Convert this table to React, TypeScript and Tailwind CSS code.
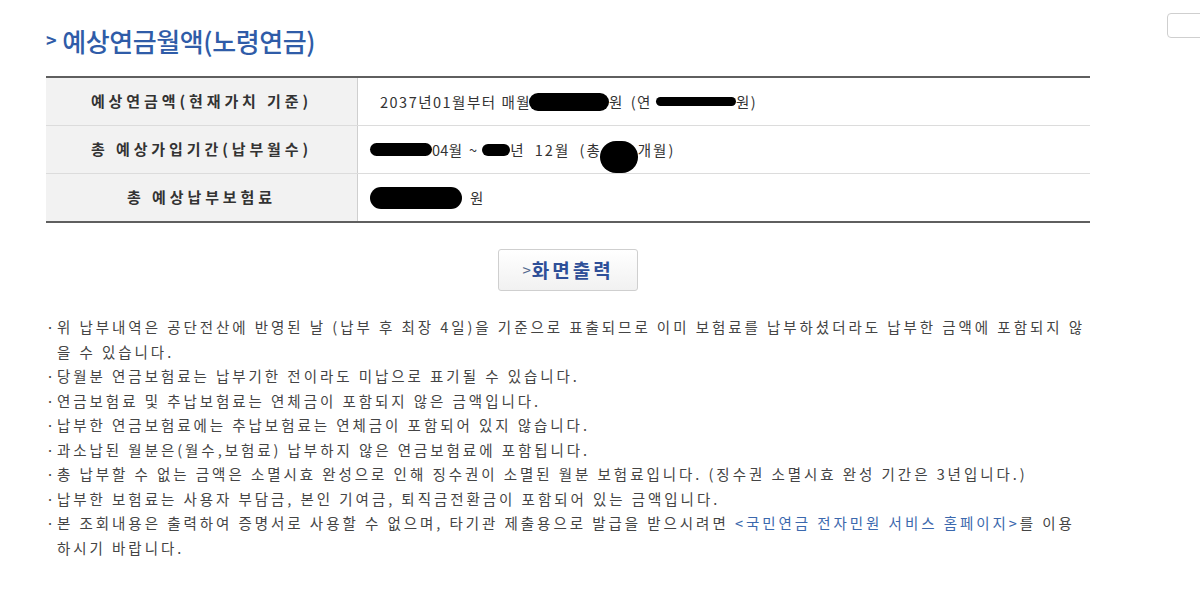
import React from 'react';

const KR = { fontFamily: '"Noto Sans CJK KR", "Noto Sans", sans-serif' };

function Blob({ className }: { className: string }) {
  return <span className={`inline-block bg-black rounded-full shrink-0 ${className}`} />;
}

const notes: React.ReactNode[] = [
  '위 납부내역은 공단전산에 반영된 날 (납부 후 최장 4일)을 기준으로 표출되므로 이미 보험료를 납부하셨더라도 납부한 금액에 포함되지 않을 수 있습니다.',
  '당월분 연금보험료는 납부기한 전이라도 미납으로 표기될 수 있습니다.',
  '연금보험료 및 추납보험료는 연체금이 포함되지 않은 금액입니다.',
  '납부한 연금보험료에는 추납보험료는 연체금이 포함되어 있지 않습니다.',
  '과소납된 월분은(월수,보험료) 납부하지 않은 연금보험료에 포함됩니다.',
  '총 납부할 수 없는 금액은 소멸시효 완성으로 인해 징수권이 소멸된 월분 보험료입니다. (징수권 소멸시효 완성 기간은 3년입니다.)',
  '납부한 보험료는 사용자 부담금, 본인 기여금, 퇴직금전환금이 포함되어 있는 금액입니다.',
  <>
    <span>본 조회내용은 출력하여 증명서로 사용할 수 없으며, 타기관 제출용으로 발급을 받으시려면 </span>
    <a className="text-[#3b68ad]">&lt;국민연금 전자민원 서비스 홈페이지&gt;</a>
    <span>를 이용</span>
    <span>하시기 바랍니다.</span>
  </>,
];

const headCell =
  'w-[312px] bg-[#f2f2f2] border-r border-[#cfcfcf] flex items-center justify-center font-bold text-[#333] text-[15px] tracking-[3.9px]';

export default function App() {
  return (
    <div className="w-full h-[597px] bg-white overflow-hidden flex" style={KR}>
      {/* Main column */}
      <div className="w-[1090px] shrink-0 pl-[46px]">
        {/* Title */}
        <h1 className="flex items-center h-[28px] mt-[26px] text-[#2f5ca8] text-[26px] font-medium tracking-[-0.4px]">
          <span className="text-[18px] font-bold mr-[6px] -mt-[2px]">&gt;</span>
          예상연금월액(노령연금)
        </h1>

        {/* Summary table */}
        <div className="mt-[22px] border-t-2 border-b-2 border-[#5f5f5f] text-[14.5px] tracking-[1.5px] text-[#333]">
          <div className="flex h-[48px] border-b border-[#dcdcdc]">
            <div className={headCell}>예상연금액(현재가치 기준)</div>
            <div className="flex-1 flex items-center pl-[22px]">
              <span>2037년01월부터 매월</span>
              <Blob className="w-[80px] h-[18px] -ml-[2px]" />
              <span className="[word-spacing:2px]">원 (연</span>
              <Blob className="w-[80px] h-[9px] ml-[4px]" />
              <span>원)</span>
            </div>
          </div>
          <div className="flex h-[48px] border-b border-[#dcdcdc]">
            <div className={headCell}>총 예상가입기간(납부월수)</div>
            <div className="flex-1 flex items-center pl-[12px]">
              <Blob className="w-[62px] h-[13px]" />
              <span className="tracking-[0.3px] [word-spacing:3px]">04월 ~</span>
              <Blob className="w-[28px] h-[12px] ml-[5px]" />
              <span className="[word-spacing:4px] tracking-[2px]">년 12월 (총</span>
              <Blob className="w-[38px] h-[32px] mt-[14px] -ml-[2px]" />
              <span className="tracking-[2px]">개월)</span>
            </div>
          </div>
          <div className="flex h-[47px]">
            <div className={headCell}>총 예상납부보험료</div>
            <div className="flex-1 flex items-center pl-[12px]">
              <Blob className="w-[92px] h-[22px]" />
              <span className="ml-[8px]">원</span>
            </div>
          </div>
        </div>

        {/* Print button */}
        <div className="flex justify-center mt-[26px]">
          <button className="w-[140px] h-[42px] border border-[#cfcfcf] rounded-[3px] bg-gradient-to-b from-white to-[#f1f1f1] text-[#2e4f98] text-[19px] font-bold tracking-[3px] flex items-center justify-center">
            <span className="text-[15px] font-normal text-[#54698f] mr-[1px] tracking-normal">&gt;</span>화면출력
          </button>
        </div>

        {/* Notes */}
        <ul className="mt-[24px] text-[14.5px] leading-[24.5px] text-[#444] tracking-[2.95px]">
          {notes.map((n, i) => (
            <li key={i} className="flex">
              <span className="w-[11px] shrink-0 tracking-normal">·</span>
              <span className="flex-1 break-all">{n}</span>
            </li>
          ))}
        </ul>
      </div>

      {/* Right edge button */}
      <div className="flex-1 pl-[77px] pt-[13px]">
        <div className="w-[50px] h-[25px] border border-[#cfcfcf] rounded-[4px] bg-white" />
      </div>
    </div>
  );
}
